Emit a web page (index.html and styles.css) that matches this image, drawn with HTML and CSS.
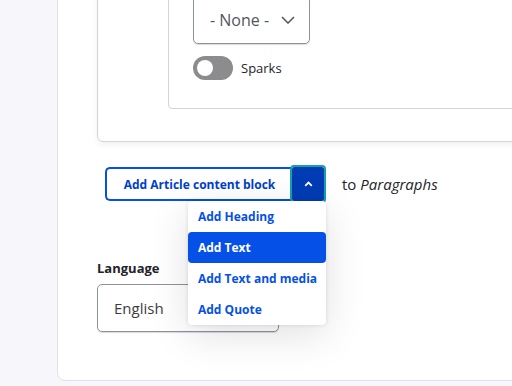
FILE: index.html
```html
<!DOCTYPE html>
<html lang="en">
<head>
    <meta charset="UTF-8">
    <meta name="viewport" content="width=device-width, initial-scale=1.0">
    <title>Article content</title>
    <link rel="stylesheet" href="styles.css">
</head>
<body>
    <div class="page">
        <div class="outer-card">
            <div class="fieldset">
                <div class="inner-card">
                    <div class="select select-none">
                        <span>- None -</span>
                        <svg class="select-arrow" width="14" height="8" viewBox="0 0 14 8"><path d="M1 1 L7 7 L13 1" fill="none" stroke="#545560" stroke-width="1.5"/></svg>
                    </div>
                    <div class="toggle-row">
                        <span class="switch"><span class="knob"></span></span>
                        <span class="switch-label">Sparks</span>
                    </div>
                </div>
            </div>

            <div class="actions">
                <div class="dropbutton">
                    <button class="add-button">Add Article content block</button>
                    <button class="dropbutton-toggle">
                        <svg width="9" height="6" viewBox="0 0 9 6"><path d="M1.2 4.8 L4.5 1.5 L7.8 4.8" fill="none" stroke="#fff" stroke-width="1.8"/></svg>
                    </button>
                    <ul class="dropdown">
                        <li>Add Heading</li>
                        <li class="active">Add Text</li>
                        <li>Add Text and media</li>
                        <li>Add Quote</li>
                    </ul>
                </div>
                <span class="to-text">to <em>Paragraphs</em></span>
            </div>

            <div class="language">
                <div class="label">Language</div>
                <div class="select select-lang"><span>English</span></div>
            </div>
        </div>
    </div>
</body>
</html>
```

FILE: styles.css
```css
body {
    margin: 0;
    background: #f7f7fb;
    font-family: "Open Sans", "Noto Sans", sans-serif;
    color: #232429;
    overflow: hidden;
    height: 386px;
}
.page {
    padding-left: 57px;
}
.outer-card {
    margin-top: -60px;
    margin-right: -20px;
    background: #fff;
    border: 1px solid #e1e1e8;
    border-radius: 8px;
    padding: 0 0 48px 39px;
}
.fieldset {
    margin-right: -20px;
    border: 1px solid #d4d4d9;
    border-radius: 6px;
    padding: 0 0 32px 70px;
    box-shadow: 0 3px 6px rgba(0, 0, 0, 0.06);
}
.inner-card {
    border: 1px solid #d4d4d9;
    border-radius: 4px;
    padding: 53px 0 28px 24px;
}
.select {
    box-sizing: border-box;
    height: 48px;
    border: 1px solid #8e929c;
    border-radius: 5px;
    display: flex;
    align-items: center;
    padding-left: 16px;
    font-size: 16px;
    box-shadow: 0 1px 1px rgba(0, 0, 0, 0.15);
}
.select-none {
    width: 117px;
    color: #545560;
}
.select-arrow {
    margin-left: auto;
    margin-right: 14px;
}
.toggle-row {
    display: flex;
    align-items: center;
    gap: 8px;
    margin-top: 12px;
    height: 24px;
}
.switch {
    width: 40px;
    height: 24px;
    border-radius: 12px;
    background: #8c8c8f;
    display: flex;
    align-items: center;
    padding-left: 4px;
    box-sizing: border-box;
}
.knob {
    width: 16px;
    height: 16px;
    border-radius: 50%;
    background: #fff;
}
.switch-label {
    font-size: 13px;
}
.actions {
    display: flex;
    align-items: center;
    margin-top: 25px;
    padding-left: 8px;
}
.dropbutton {
    position: relative;
    display: flex;
}
.add-button {
    box-sizing: border-box;
    width: 187px;
    height: 34px;
    border: 2px solid #0550e6;
    border-right: none;
    border-radius: 5px 0 0 5px;
    background: #fff;
    color: #003ecc;
    font-family: inherit;
    font-weight: 700;
    font-size: 12px;
    padding: 0;
}
.dropbutton-toggle {
    width: 32px;
    height: 34px;
    border: none;
    background: #003cb4;
    outline: 2px solid #15a0ab;
    border-radius: 2px;
    display: flex;
    align-items: center;
    justify-content: center;
    padding: 0;
}
.dropdown {
    position: absolute;
    top: 100%;
    right: -2px;
    width: 138px;
    margin: 0;
    padding: 0;
    list-style: none;
    background: #fff;
    border-radius: 4px;
    box-shadow: 0 0 4px rgba(0, 0, 0, 0.12), 0 10px 40px rgba(0, 0, 0, 0.12);
}
.dropdown li {
    height: 31px;
    line-height: 31px;
    padding-left: 10px;
    font-size: 12px;
    font-weight: 700;
    color: #0550e6;
    border-radius: 4px;
    white-space: nowrap;
}
.dropdown li.active {
    background: #0550e6;
    color: #fff;
}
.to-text {
    margin-left: 18px;
    font-size: 15px;
}
.language {
    margin-top: 58px;
}
.label {
    font-size: 13px;
    font-weight: 700;
    line-height: 18px;
    margin-bottom: 7px;
}
.select-lang {
    width: 182px;
    font-size: 15px;
    color: #3b3c42;
}
```
